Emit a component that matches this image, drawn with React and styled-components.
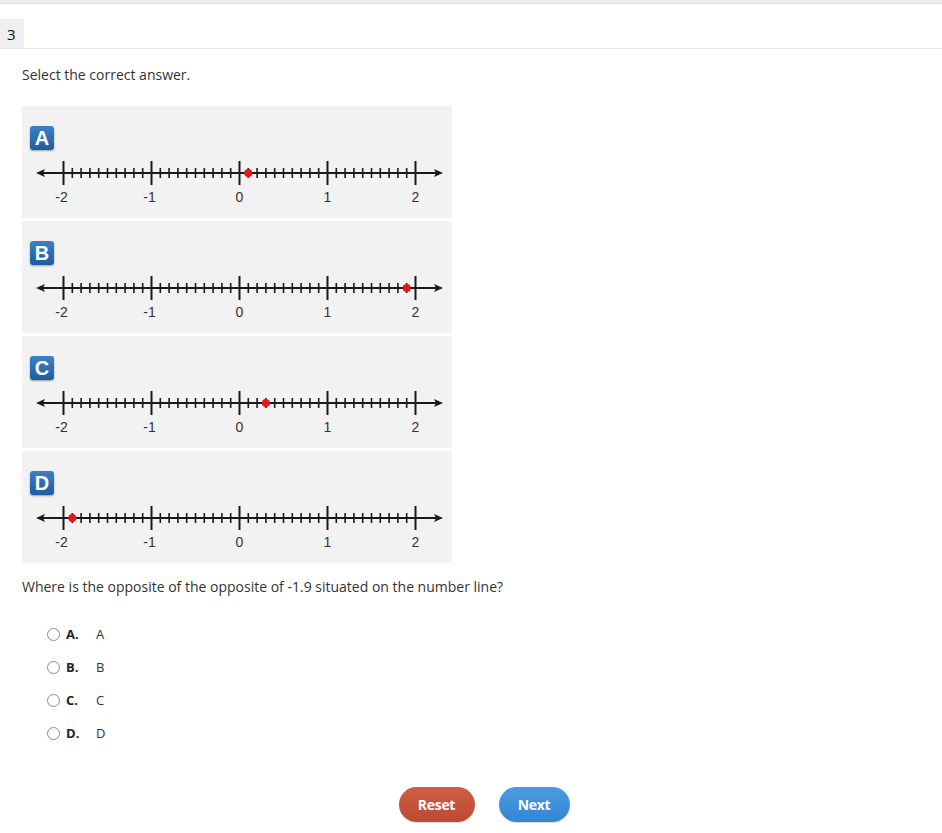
import React from "react";
import styled, { createGlobalStyle } from "styled-components";

const Global = createGlobalStyle`
  html, body { margin: 0; padding: 0; background: #fff; }
  body { font-family: "Open Sans", "Liberation Sans", sans-serif; color: #333; }
`;

const Page = styled.div`
  width: 942px;
  min-height: 833px;
`;

const TopBand = styled.div`
  height: 3px;
  background: #ececec;
  border-bottom: 1px solid #e2e2e2;
`;

const Header = styled.div`
  height: 44px;
  display: flex;
  align-items: flex-end;
  border-bottom: 1px solid #e6e6e6;
`;

const Tab = styled.div`
  width: 24px;
  height: 29px;
  background: #efefef;
  font-size: 15px;
  color: #111;
  display: flex;
  align-items: center;
  padding-left: 7px;
  box-sizing: border-box;
`;

const Content = styled.div`
  padding: 16px 0 0 22px;
`;

const Prompt = styled.div`
  font-size: 14px;
  line-height: 20px;
  color: #333;
`;

const Panels = styled.div`
  margin-top: 21px;
  display: flex;
  flex-direction: column;
  gap: 3px;
  width: 430px;
`;

const Panel = styled.div`
  height: 112px;
  background: #f2f2f2;
  box-sizing: border-box;
  padding: 20px 0 0 8px;
  display: flex;
  flex-direction: column;
`;

const Badge = styled.div`
  width: 24px;
  height: 24px;
  border-radius: 3px;
  background: linear-gradient(#3d80c6, #1f5c9f);
  box-shadow: 0 1px 2px rgba(0, 0, 0, 0.35);
  color: #fff;
  font-family: "Liberation Sans", Arial, sans-serif;
  font-weight: bold;
  font-size: 20px;
  display: flex;
  align-items: center;
  justify-content: center;
`;

const LineSvg = styled.svg`
  display: block;
  margin-left: -8px;
`;

const Question = styled.div`
  margin-top: 14px;
  font-size: 14px;
  line-height: 20px;
  color: #333;
`;

const Options = styled.div`
  margin-top: 27px;
  padding-left: 25px;
  display: flex;
  flex-direction: column;
  gap: 13px;
`;

const Option = styled.label`
  display: flex;
  align-items: center;
  height: 20px;
  font-size: 13px;
  color: #333;
`;

const Radio = styled.span`
  width: 11px;
  height: 11px;
  border: 1px solid #8a8a8a;
  border-radius: 50%;
  background: #fff;
  margin-right: 6px;
`;

const Key = styled.span`
  font-weight: bold;
  color: #222;
  width: 30px;
`;

const Buttons = styled.div`
  margin-top: 44px;
  display: flex;
  justify-content: center;
  gap: 24px;
  padding-left: 26px;
`;

const Button = styled.button`
  height: 35px;
  width: ${(p) => p.$w}px;
  border: none;
  border-radius: 18px;
  color: #fff;
  font-family: "Open Sans", sans-serif;
  font-weight: bold;
  font-size: 14px;
  letter-spacing: -0.3px;
  background: ${(p) => p.$bg};
  box-shadow: 0 1px 1px rgba(0, 0, 0, 0.15);
`;

const ZERO = 217.5;
const UNIT = 88;
const LY = 23;

function NumberLine({ value }) {
  const ticks = [];
  for (let i = -20; i <= 20; i++) {
    const x = ZERO + (i / 10) * UNIT;
    const major = i % 10 === 0;
    ticks.push(
      <line
        key={i}
        x1={x}
        x2={x}
        y1={major ? LY - 12 : LY - 5}
        y2={major ? LY + 12 : LY + 5}
        stroke="#1a1a1a"
        strokeWidth={major ? 2 : 1.6}
      />
    );
  }
  const labels = [-2, -1, 0, 1, 2].map((n) => (
    <text
      key={n}
      x={ZERO + n * UNIT - (n < 0 ? 2 : 0)}
      y={LY + 29}
      textAnchor="middle"
      fontFamily="Liberation Sans, Arial, sans-serif"
      fontSize="14"
      fill="#333"
    >
      {n}
    </text>
  ));
  return (
    <LineSvg width="430" height="60" viewBox="0 0 430 60">
      <line x1="18" x2="417" y1={LY} y2={LY} stroke="#1a1a1a" strokeWidth="2" />
      <polygon points={`14,${LY} 23,${LY - 4} 21,${LY} 23,${LY + 4}`} fill="#1a1a1a" />
      <polygon points={`421,${LY} 412,${LY - 4} 414,${LY} 412,${LY + 4}`} fill="#1a1a1a" />
      {ticks}
      <circle cx={ZERO + value * UNIT} cy={LY} r="4" fill="#e8141a" />
      {labels}
    </LineSvg>
  );
}

const choices = [
  { k: "A", v: 0.1 },
  { k: "B", v: 1.9 },
  { k: "C", v: 0.3 },
  { k: "D", v: -1.9 },
];

export default function App() {
  return (
    <Page>
      <Global />
      <TopBand />
      <Header>
        <Tab>3</Tab>
      </Header>
      <Content>
        <Prompt>Select the correct answer.</Prompt>
        <Panels>
          {choices.map((c) => (
            <Panel key={c.k}>
              <Badge>{c.k}</Badge>
              <NumberLine value={c.v} />
            </Panel>
          ))}
        </Panels>
        <Question>Where is the opposite of the opposite of -1.9 situated on the number line?</Question>
        <Options>
          {choices.map((c) => (
            <Option key={c.k}>
              <Radio />
              <Key>{c.k}.</Key>
              <span>{c.k}</span>
            </Option>
          ))}
        </Options>
      </Content>
      <Buttons>
        <Button $w={76} $bg="linear-gradient(#d05d45, #bb4a34)">Reset</Button>
        <Button $w={71} $bg="linear-gradient(#4b9be2, #3486d2)">Next</Button>
      </Buttons>
    </Page>
  );
}
